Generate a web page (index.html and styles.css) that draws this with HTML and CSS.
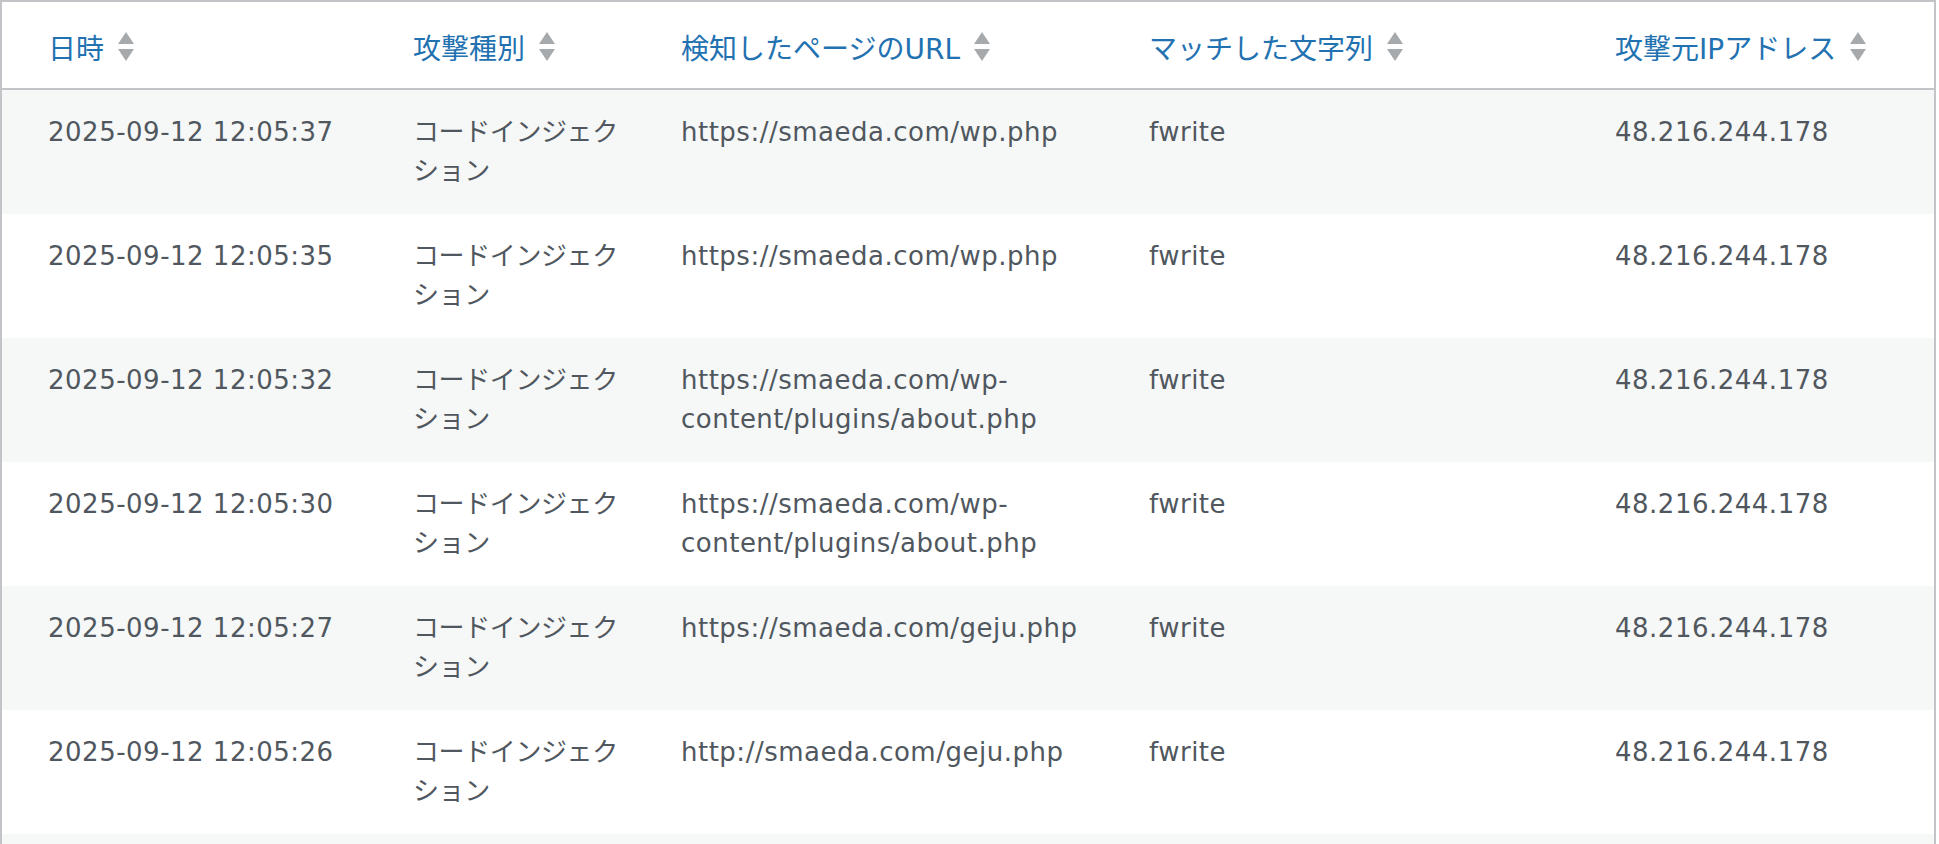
FILE: index.html
```html
<!DOCTYPE html>
<html lang="ja">
<head>
  <meta charset="UTF-8">
  <meta name="viewport" content="width=device-width, initial-scale=1.0">
  <title>攻撃ログ</title>
  <link rel="stylesheet" href="styles.css">
</head>
<body>
  <!-- Attack log table -->
  <table class="log-table">
    <colgroup>
      <col class="col-date">
      <col class="col-type">
      <col class="col-url">
      <col class="col-match">
      <col class="col-ip">
    </colgroup>
    <thead>
      <tr>
        <th><a class="sort-link" href="#">日時<svg class="sort-icon" viewBox="0 0 16 29"><path d="M0 12 8 0 16 12Z"/><path d="M0 17H16L8 29Z"/></svg></a></th>
        <th><a class="sort-link" href="#">攻撃種別<svg class="sort-icon" viewBox="0 0 16 29"><path d="M0 12 8 0 16 12Z"/><path d="M0 17H16L8 29Z"/></svg></a></th>
        <th><a class="sort-link" href="#">検知したページのURL<svg class="sort-icon" viewBox="0 0 16 29"><path d="M0 12 8 0 16 12Z"/><path d="M0 17H16L8 29Z"/></svg></a></th>
        <th><a class="sort-link" href="#">マッチした文字列<svg class="sort-icon" viewBox="0 0 16 29"><path d="M0 12 8 0 16 12Z"/><path d="M0 17H16L8 29Z"/></svg></a></th>
        <th><a class="sort-link" href="#">攻撃元IPアドレス<svg class="sort-icon" viewBox="0 0 16 29"><path d="M0 12 8 0 16 12Z"/><path d="M0 17H16L8 29Z"/></svg></a></th>
      </tr>
    </thead>
    <tbody>
      <tr>
        <td>2025-09-12 12:05:37</td>
        <td class="attack-type">コードインジェクション</td>
        <td>https://smaeda.com/wp.php</td>
        <td>fwrite</td>
        <td>48.216.244.178</td>
      </tr>
      <tr>
        <td>2025-09-12 12:05:35</td>
        <td class="attack-type">コードインジェクション</td>
        <td>https://smaeda.com/wp.php</td>
        <td>fwrite</td>
        <td>48.216.244.178</td>
      </tr>
      <tr>
        <td>2025-09-12 12:05:32</td>
        <td class="attack-type">コードインジェクション</td>
        <td>https://smaeda.com/wp-content/plugins/about.php</td>
        <td>fwrite</td>
        <td>48.216.244.178</td>
      </tr>
      <tr>
        <td>2025-09-12 12:05:30</td>
        <td class="attack-type">コードインジェクション</td>
        <td>https://smaeda.com/wp-content/plugins/about.php</td>
        <td>fwrite</td>
        <td>48.216.244.178</td>
      </tr>
      <tr>
        <td>2025-09-12 12:05:27</td>
        <td class="attack-type">コードインジェクション</td>
        <td>https://smaeda.com/geju.php</td>
        <td>fwrite</td>
        <td>48.216.244.178</td>
      </tr>
      <tr>
        <td>2025-09-12 12:05:26</td>
        <td class="attack-type">コードインジェクション</td>
        <td>http://smaeda.com/geju.php</td>
        <td>fwrite</td>
        <td>48.216.244.178</td>
      </tr>
      <tr>
        <td>2025-09-12 12:05:24</td>
        <td class="attack-type">コードインジェクション</td>
        <td>http://smaeda.com/wp.php</td>
        <td>fwrite</td>
        <td>48.216.244.178</td>
      </tr>
    </tbody>
  </table>
</body>
</html>
```

FILE: styles.css
```css
body {
  margin: 0;
  background-color: #fff;
  font-family: "DejaVu Sans", "Noto Sans CJK JP", sans-serif;
  color: #50575e;
}

.log-table {
  width: 1936px;
  table-layout: fixed;
  border-collapse: separate;
  border-spacing: 0;
  border: 2px solid #c3c4c7;
}

/* column widths, padding included */
.col-date  { width: 387px; }
.col-type  { width: 268px; }
.col-url   { width: 468px; }
.col-match { width: 466px; }
.col-ip    { width: 343px; }

.log-table thead tr {
  height: 88px;
}

.log-table th {
  padding: 3px 24px 0;
  text-align: left;
  font-weight: 400;
  font-size: 28px;
  vertical-align: middle;
  border-bottom: 2px solid #c3c4c7;
  background-color: #fff;
}

.sort-link {
  color: #2271b1;
  text-decoration: none;
  display: inline-flex;
  align-items: center;
}

.sort-icon {
  width: 16px;
  height: 29px;
  margin-left: 14px;
  fill: #a7aaad;
}

.log-table tbody tr {
  height: 124px;
}

.log-table tbody tr:nth-child(odd) {
  background-color: #f6f7f7;
}

.log-table td {
  padding: 23px 24px 0;
  font-size: 26px;
  line-height: 39px;
  letter-spacing: 0.5px;
  vertical-align: top;
}

.log-table td.attack-type {
  letter-spacing: -0.4px;
}

.log-table th:first-child,
.log-table td:first-child {
  padding-left: 46px;
}
```
